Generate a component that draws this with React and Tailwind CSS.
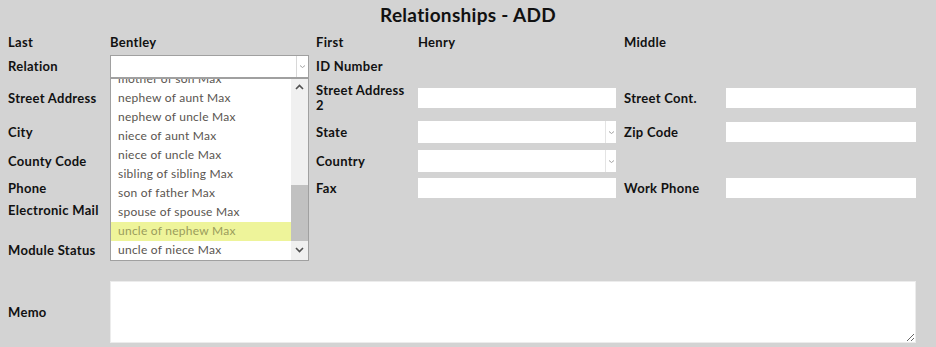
import React from "react";

const LABEL = "text-[13px] font-bold text-[#111] leading-[15px] tracking-[0.3px]";
const FONT = { fontFamily: "Lato, 'DejaVu Sans', sans-serif" };

const OPTIONS = [
  "mother of son Max",
  "nephew of aunt Max",
  "nephew of uncle Max",
  "niece of aunt Max",
  "niece of uncle Max",
  "sibling of sibling Max",
  "son of father Max",
  "spouse of spouse Max",
  "uncle of nephew Max",
  "uncle of niece Max",
];

function Chevron({ className = "" }) {
  return (
    <svg width="7" height="5" viewBox="0 0 7 5" className={className}>
      <path d="M1 1.5 L3.5 3.5 L6 1.5" fill="none" stroke="#999" strokeWidth="0.9" />
    </svg>
  );
}

function TextBox({ w = "w-[198px]", h = "h-[20px]" }) {
  return <div className={`${w} ${h} bg-white`} />;
}

function SelectBox({ h = "h-[22px]" }) {
  return (
    <div className={`w-[198px] ${h} bg-white flex justify-end`}>
      <div className="w-[11px] border-l border-[#e4e4e4] flex items-center justify-center">
        <Chevron />
      </div>
    </div>
  );
}

function Group({ label, children, last }) {
  return (
    <div className={`flex items-center ${last ? "w-[292px]" : "w-[308px]"}`}>
      <div className={`w-[102px] ${LABEL}`}>{label}</div>
      {children}
    </div>
  );
}

function Row({ h, children }) {
  return <div className={`flex items-center pl-[8px] ${h}`}>{children}</div>;
}

function RelationDropdown() {
  return (
    <div className="relative w-[199px] h-[23px] bg-white border border-[#a0a0a0] flex justify-end">
      <div className="w-[12px] border-l border-[#d8d8d8] flex items-center justify-center">
        <Chevron />
      </div>
      <div className="absolute left-[-1px] top-[22px] w-[199px] h-[183px] bg-white border border-[#a0a0a0] flex overflow-hidden z-10">
        <div className="flex-1 overflow-hidden">
          <div className="mt-[-9px]">
            {OPTIONS.map((o) => (
              <div
                key={o}
                className={`h-[19px] pl-[7px] flex items-center text-[12px] tracking-[0.25px] ${
                  o === "uncle of nephew Max" ? "bg-[#eef49a] text-[#9a9c5c]" : "text-[#5a5550]"
                }`}
              >
                {o}
              </div>
            ))}
          </div>
        </div>
        <div className="w-[17px] bg-[#f0f0f0] flex flex-col">
          <div className="h-[17px] flex items-center justify-center">
            <svg width="9" height="6" viewBox="0 0 9 6">
              <path d="M1 5 L4.5 1.5 L8 5" fill="none" stroke="#505050" strokeWidth="1.6" />
            </svg>
          </div>
          <div className="h-[89px]" />
          <div className="h-[56px] bg-[#c1c1c1]" />
          <div className="flex-1 flex items-center justify-center">
            <svg width="9" height="6" viewBox="0 0 9 6">
              <path d="M1 1 L4.5 4.5 L8 1" fill="none" stroke="#505050" strokeWidth="1.6" />
            </svg>
          </div>
        </div>
      </div>
    </div>
  );
}

export default function App() {
  return (
    <div className="w-[936px] h-[347px] bg-[#d3d3d3] overflow-hidden" style={FONT}>
      <div className="h-[30px] flex items-center justify-center text-[19px] font-bold text-[#111] tracking-[0.3px]">
        Relationships - ADD
      </div>

      <Row h="h-[24px]">
        <Group label="Last">
          <div className={LABEL}>Bentley</div>
        </Group>
        <Group label="First">
          <div className={LABEL}>Henry</div>
        </Group>
        <Group label="Middle" last />
      </Row>

      <Row h="h-[24px]">
        <Group label="Relation">
          <RelationDropdown />
        </Group>
        <Group label="ID Number" />
        <Group label="" last />
      </Row>

      <Row h="h-[40px]">
        <Group label="Street Address">
          <TextBox />
        </Group>
        <Group label={<span>Street Address<br />2</span>}>
          <TextBox />
        </Group>
        <Group label="Street Cont." last>
          <TextBox w="w-[190px]" />
        </Group>
      </Row>

      <Row h="h-[28px]">
        <Group label="City">
          <TextBox />
        </Group>
        <Group label="State">
          <SelectBox />
        </Group>
        <Group label="Zip Code" last>
          <TextBox w="w-[190px]" />
        </Group>
      </Row>

      <Row h="h-[30px]">
        <Group label="County Code">
          <SelectBox />
        </Group>
        <Group label="Country">
          <SelectBox />
        </Group>
        <Group label="" last />
      </Row>

      <Row h="h-[24px]">
        <Group label="Phone">
          <TextBox />
        </Group>
        <Group label="Fax">
          <TextBox />
        </Group>
        <Group label="Work Phone" last>
          <TextBox w="w-[190px]" />
        </Group>
      </Row>

      <Row h="h-[20px]">
        <Group label="Electronic Mail" />
      </Row>

      <Row h="h-[60px]">
        <Group label="Module Status" />
      </Row>

      <div className="flex items-center pl-[8px] h-[64px]">
        <div className={`w-[102px] ${LABEL}`}>Memo</div>
        <textarea className="w-[806px] h-[62px] bg-white border border-[#ececec] outline-none" />
      </div>
    </div>
  );
}
